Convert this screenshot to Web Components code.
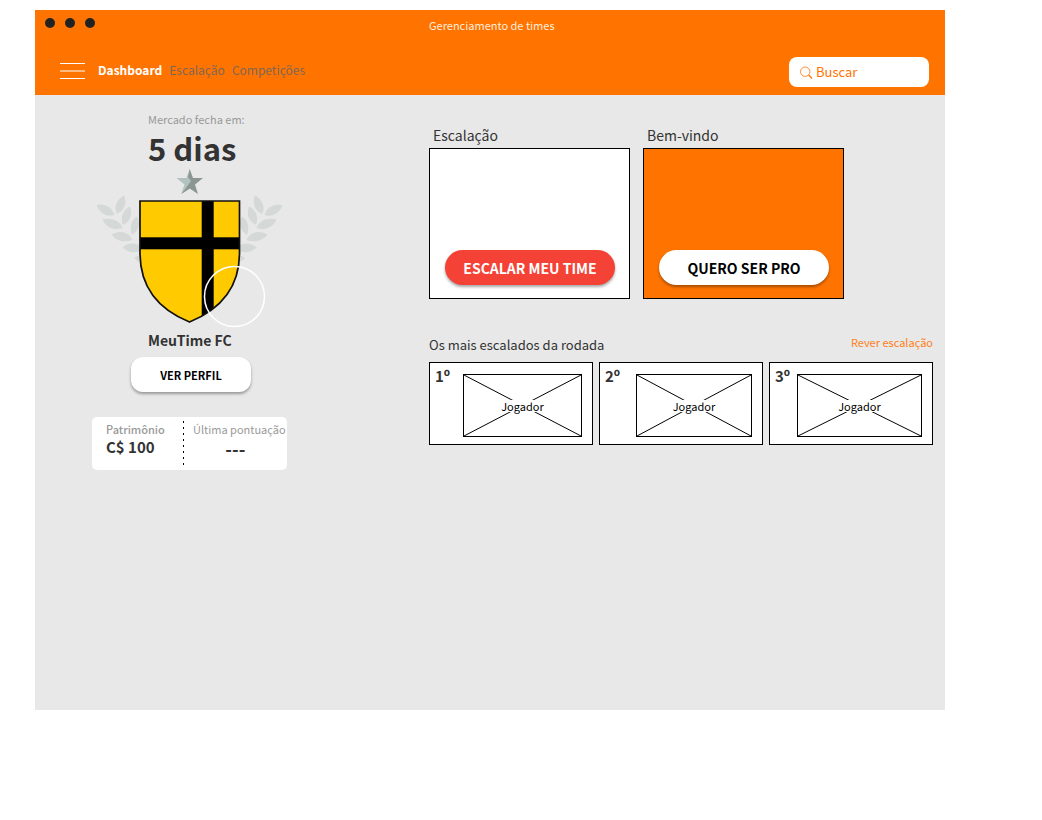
<!DOCTYPE html>
<html lang="pt-BR">
<head>
<meta charset="utf-8">
<title>Gerenciamento de times</title>
<style>
  body {
    margin: 0;
    padding: 10px 97px 110px 35px;
    background: #fff;
    color: #333;
    font: 12px/18px "Noto Sans CJK SC", "Noto Sans", sans-serif;
    --brand: #ff7400;
    --aside: 394px;
  }
</style>
</head>
<body>
<team-app></team-app>

<script>
const define = (name, html) => {
  const template = document.createElement('template');
  template.innerHTML = html;
  customElements.define(name, class extends HTMLElement {
    constructor() {
      super();
      this.attachShadow({ mode: 'open' }).append(template.content.cloneNode(true));
    }
  });
};

define('pill-button', `
  <style>
    :host { display: block; }
    button {
      width: 100%; height: 35px; padding: 0; border: 0; border-radius: 18px;
      font: bold 14px/20px "Noto Sans CJK SC", sans-serif;
      color: #000; background: #fff;
      box-shadow: 0 2px 3px rgba(0, 0, 0, .35);
      cursor: pointer;
    }
    :host([danger]) button { color: #fff; background: #f44336; }
    :host([compact]) button { font-size: 11px; border-radius: 12px; }
  </style>
  <button type="button"><slot></slot></button>
`);

define('search-field', `
  <style>
    :host { display: block; width: 140px; }
    label {
      display: flex; align-items: center; gap: 3px; height: 30px;
      padding: 0 11px; box-sizing: border-box; border-radius: 8px; background: #fff;
    }
    svg { flex: none; }
    input {
      flex: 1; min-width: 0; padding: 0; border: 0; outline: 0; background: none;
      font: 13px/20px "Noto Sans CJK SC", sans-serif; color: var(--brand);
    }
    input::placeholder { color: var(--brand); opacity: 1; }
  </style>
  <label>
    <svg width="13" height="14" viewBox="0 0 13 14" fill="none" stroke="#ff7400">
      <circle cx="5.2" cy="6.7" r="4.7" stroke-width=".8"/>
      <path d="M8.700 10 L12 13.500" stroke-width="1.3"/>
    </svg>
    <input type="search" placeholder="Buscar" aria-label="Buscar">
  </label>
`);

define('app-header', `
  <style>
    :host { display: block; height: 85px; background: var(--brand); }
    .title { display: grid; grid-template-columns: var(--aside) 1fr; height: 30px; align-items: center; color: #ffeede; font-size: 11px; }
    .dots { display: flex; gap: 10px; padding: 0 0 4px 10px; }
    .dots i { width: 10px; height: 10px; border-radius: 50%; background: #222; }
    .bar { display: flex; align-items: flex-start; padding: 17px 16px 0 25px; }
    .menu { width: 25px; height: 16px; padding: 0; margin: 6px 13px 0 0; border: 0; background: none; }
    .menu svg { display: block; }
    nav { display: flex; flex: 1; gap: 7px; padding-top: 4px; }
    a { color: #7f6754; text-decoration: none; }
    a[aria-current] { color: #fff; font-weight: bold; }
  </style>
  <div class="title">
    <div class="dots"><i></i><i></i><i></i></div>
    <span>Gerenciamento de times</span>
  </div>
  <div class="bar">
    <button class="menu" type="button" aria-label="Menu">
      <svg width="25" height="16" viewBox="0 0 25 16" fill="#fff">
        <rect width="25" height="1"/><rect y="7" width="25" height="2" opacity=".5"/><rect y="15" width="25" height="1"/>
      </svg>
    </button>
    <nav>
      <a href="#dashboard" aria-current="page">Dashboard</a>
      <a href="#escalacao">Escalação</a>
      <a href="#competicoes">Competições</a>
    </nav>
    <search-field></search-field>
  </div>
`);

define('team-crest', `
  <style>
    :host { display: block; }
    svg { display: block; }
  </style>
  <svg width="195" height="160" viewBox="92 168 195 160">
    <defs>
      <g id="branch" fill="#d4d9d7">
        <path d="M96.500 205 C103 203 112 206 114.500 215 C107 217.500 99 213 96.500 205Z"/>
        <path d="M124 195.500 C127 203 125 210 117 214 C113 207 117 199 124 195.500Z"/>
        <path d="M130 206.500 C133 214 131 221 123 225 C120 217 123 210 130 206.500Z"/>
        <path d="M102.500 219.500 C110 217 120 220 122.500 228 C115 231 106 228 102.500 219.500Z"/>
        <path d="M137 216.500 C141 223 139 231 132 235 C129 227 131 220 137 216.500Z"/>
        <path d="M111.500 234.500 C118 230 129 231 132.500 240 C125 243 116 241 111.500 234.500Z"/>
        <path d="M122.500 247.500 C128 242 138 242 144 249 C137 254 128 253 122.500 247.500Z"/>
        <path d="M134 258 C138 254 146 255 150 259 C146 264 138 263 134 258Z"/>
      </g>
    </defs>
    <use href="#branch"/>
    <use href="#branch" transform="translate(379 0) scale(-1 1)"/>
    <path fill="#b2c2be" d="M189.700 169 L186.500 178 H176.500 L184.500 184.500 L181.300 194 L189.700 188.500 L193 182 L190 175Z"/>
    <path fill="#8b9693" d="M189.700 169 L193 178 H203 L195 184.500 L198 194 L189.700 188.500 L181.300 194 L186 188 L191 181 L188 177Z"/>
    <clipPath id="shield"><path d="M140 201 H239.500 V253 C239.500 289 219 310 189.500 322 C160 310 140 289 140 253Z"/></clipPath>
    <g clip-path="url(#shield)">
      <rect x="139" y="200" width="101" height="123" fill="#ffcb00"/>
      <rect x="201.700" y="200" width="12" height="123"/>
      <rect x="139" y="237.300" width="101" height="12"/>
    </g>
    <path d="M140 201 H239.500 V253 C239.500 289 219 310 189.500 322 C160 310 140 289 140 253Z" fill="none" stroke="#111" stroke-width="1.700"/>
    <circle cx="234.500" cy="296.500" r="30" fill="none" stroke="#fff" stroke-width="1.500"/>
  </svg>
`);

define('team-stats', `
  <style>
    :host {
      display: grid; grid-template-columns: 91px 1fr; height: 53px; padding-top: 3px; box-sizing: border-box;
      border-radius: 5px; background: #fff;
    }
    dl { margin: 0; }
    dt { color: #999; font-size: 11px; white-space: nowrap; }
    dd { margin: 0; font-size: 15px; font-weight: bold; }
    .worth { padding-left: 14px; }
    .worth dt { font-weight: 500; }
    .score { display: flex; gap: 9px; }
    .score svg { flex: none; }
    .score dd { padding-right: 8px; text-align: center; font-size: 18px; line-height: 20px; }
  </style>
  <dl class="worth"><dt>Patrimônio</dt><dd>C$ 100</dd></dl>
  <div class="score">
    <svg width="1" height="46"><path d="M.5 1 V46" stroke="#000" stroke-dasharray="2 4"/></svg>
    <dl><dt>Última pontuação</dt><dd>---</dd></dl>
  </div>
`);

define('team-panel', `
  <style>
    :host { display: block; width: 195px; padding: 15px 0 0 57px; }
    .text { padding-left: 56px; }
    p, h1, h2 { margin: 0; white-space: nowrap; }
    p { color: #999; font-size: 11px; }
    h1 { font-size: 31px; line-height: 40px; font-weight: bold; }
    h2 { font-size: 14px; line-height: 24px; font-weight: bold; }
    pill-button { width: 120px; margin: 5px auto 25px 39px; }
  </style>
  <div class="text"><p>Mercado fecha em:</p><h1>5 dias</h1></div>
  <team-crest></team-crest>
  <div class="text"><h2>MeuTime FC</h2></div>
  <pill-button compact>VER PERFIL</pill-button>
  <team-stats></team-stats>
`);

define('promo-card', `
  <style>
    :host { display: block; }
    h2 { margin: 0 0 3px 4px; font-size: 14px; line-height: 20px; font-weight: normal; }
    .box {
      display: flex; align-items: flex-end; height: 151px; padding: 0 14px 13px 15px; box-sizing: border-box;
      border: 1px solid #000; background: #fff;
    }
    :host([brand]) .box { background: var(--brand); }
    ::slotted(*) { flex: 1; }
  </style>
  <h2><slot name="title"></slot></h2>
  <div class="box"><slot></slot></div>
`);

define('player-card', `
  <style>
    :host {
      display: flex; justify-content: space-between; height: 83px; padding: 11px 10px 0 5px; box-sizing: border-box;
      border: 1px solid #000; background: #fff;
    }
    b { font-size: 15px; line-height: 20px; margin-top: -8px; }
    figure { display: grid; width: 119px; height: 63px; margin: 0; }
    :host([photo=narrow]) figure { width: 116px; }
    :host([photo=wide]) figure { width: 125px; }
    svg, figcaption { grid-area: 1 / 1; }
    svg { width: 100%; height: 100%; box-sizing: border-box; border: 1px solid #000; }
    figcaption { z-index: 1; place-self: center; background: #fff; color: #000; font-size: 11px; line-height: 12px; }
  </style>
  <b><slot name="rank"></slot></b>
  <figure>
    <svg viewBox="0 0 100 100" preserveAspectRatio="none" stroke="#000">
      <path d="M0 0 L100 100 M0 100 L100 0" vector-effect="non-scaling-stroke"/>
    </svg>
    <figcaption><slot></slot></figcaption>
  </figure>
`);

define('team-app', `
  <style>
    :host { display: flex; flex-direction: column; min-height: calc(100vh - 120px); background: #e8e8e8; }
    .content { display: grid; grid-template-columns: var(--aside) 1fr; }
    main { padding: 30px 12px 0 0; }
    .promos { display: grid; grid-template-columns: 1fr 1fr; gap: 13px; padding-right: 89px; }
    .heading { display: flex; justify-content: space-between; margin: 34px 0 5px; }
    h2 { margin: 0; font-size: 13px; line-height: 24px; font-weight: normal; }
    a { color: #ff7f1a; font-size: 11px; text-decoration: none; }
    .ranking { display: grid; grid-template-columns: repeat(3, 1fr); gap: 6px; }
  </style>
  <app-header></app-header>
  <div class="content">
    <team-panel></team-panel>
    <main>
      <section class="promos">
        <promo-card><span slot="title">Escalação</span><pill-button danger>ESCALAR MEU TIME</pill-button></promo-card>
        <promo-card brand><span slot="title">Bem-vindo</span><pill-button>QUERO SER PRO</pill-button></promo-card>
      </section>
      <section>
        <div class="heading"><h2>Os mais escalados da rodada</h2><a href="#rever">Rever escalação</a></div>
        <div class="ranking">
          <player-card><span slot="rank">1º</span>Jogador</player-card>
          <player-card photo="narrow"><span slot="rank">2º</span>Jogador</player-card>
          <player-card photo="wide"><span slot="rank">3º</span>Jogador</player-card>
        </div>
      </section>
    </main>
  </div>
`);
</script>
</body>
</html>
